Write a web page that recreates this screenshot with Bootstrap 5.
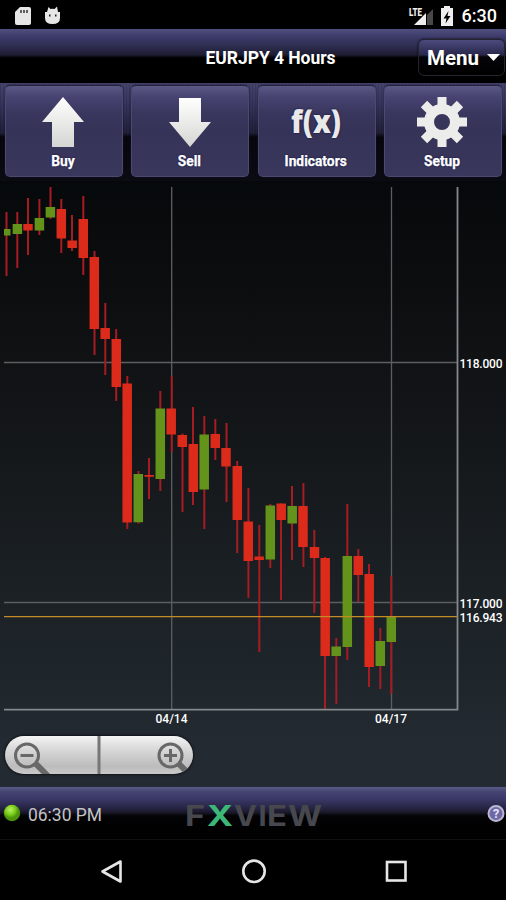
<!DOCTYPE html>
<html lang="en">
<head>
<meta charset="utf-8">
<meta name="viewport" content="width=device-width, initial-scale=1">
<title>FXView</title>
<link href="https://cdn.jsdelivr.net/npm/bootstrap@5.3.0/dist/css/bootstrap.min.css" rel="stylesheet">
<style>
body{background:#000;color:#fff;font-family:Roboto,"Liberation Sans",sans-serif;width:506px;height:900px;overflow:hidden}
svg{display:block;flex:none}
.status{height:29px;font-size:18px;line-height:28px;padding:2px 9px 0 14px}
.titlebar{height:54px;background:linear-gradient(#504e7e 0,#3c3a68 8px,#302f55 16px,#1d1c31 26px,#08080e 28px,#000 29px);font-size:17.5px;letter-spacing:-.05px;padding:2px 1px 0 0;display:grid;grid-template-columns:123px 1fr 87px}
.titlebar h1{font-size:17.5px;padding-top:2px}
.menu-btn{height:37px;margin-top:1px;border:1px solid #24232e;border-radius:6px;background:linear-gradient(#4c4a7e,#28274a 15px,#05050a 17px,#000);font-size:20.5px;padding:1px 4px 0 8px;color:#fff;box-shadow:0 0 2px #000}
.tools{height:98px;background:repeating-linear-gradient(90deg,#0002 0 1px,transparent 1px 3px),linear-gradient(#46446f 0,#34325a 24px,#202038 50px,#06060c 54px,#0b0b13 98px);padding:2px 4px 4px 5px;gap:8.5px}
.tool{flex:1 1 0;border:1px solid #4b4970;border-top-color:#252340;border-radius:5px;background:linear-gradient(#5b5885 0,#454270 12px,#3a375f 26px,#363358 45px,#3a375d);box-shadow:0 0 2px #17162a;color:#fff;font-size:13.8px;line-height:16px;padding:10px 2px 0 0;text-shadow:0 0 2px #0a0938}
.tool span{margin-top:5px;-webkit-text-stroke:.25px #fff}
.chart{height:555px;background:linear-gradient(#06090b,#0c0d0e 100px,#14171a 260px,#1f262b 500px,#222930)}
.below{height:51px;background:#242a31;padding:0 5px}
.zoomer{width:188px;height:38px;border-radius:19px;overflow:hidden;background:linear-gradient(#f5f5f5,#dcdcdc 30%,#bcbcbc 80%,#c9c9c9);box-shadow:0 0 2px 1px #11151a}
.foot{height:53px;border-bottom:1px solid #111;background:linear-gradient(#5b5987 0,#45436f 5px,#3a3866 12px,#292748 20px,#1c1a2d 25px,#030305 29px,#000)}
.navrow{height:60px}
</style>
</head>
<body>
<header class="status d-flex align-items-center">
 <svg width="48" height="24" viewBox="0 0 48 24"><path fill="#e6e6e6" d="M6 3h9q2 0 2 2v14q0 2-2 2H3q-2 0-2-2V8z"/><path d="M7 6v3M10 6v3M13 6v3" stroke="#333" stroke-width="1.5"/><path fill="#e6e6e6" d="M31 8h15v6q0 6-7.500 6T31 14zM33 8l1.500-5 2 2q2-.7 4 0L43 2.500 44 8z"/><path d="M35 11.500h1.500M41 11.500h1.500" stroke="#222" stroke-width="2"/></svg>
 <svg class="ms-auto me-2" width="46" height="24" viewBox="0 0 46 24"><path fill="#777" d="M19 11l6-6v16h-6z" opacity=".6"/><path fill="#eee" d="M6 21L18 9v12z"/><text x="1" y="11.500" font-size="11" font-weight="900" fill="#eee" textLength="13" lengthAdjust="spacingAndGlyphs">LTE</text><path fill="#eee" d="M33 4h3V2h6v2h3v18H33z"/><path fill="#000" d="M40.500 7l-5 7.500h3l-1 5 5-7.500h-3z"/></svg>
 <span class="fw-medium">6:30</span>
</header>
<section class="titlebar">
 <span></span>
 <h1 class="fw-bold text-center align-self-center mb-0">EURJPY 4 Hours</h1>
 <div class="d-flex align-items-center"><button class="menu-btn w-100 fw-bold d-flex align-items-center justify-content-between">Menu <svg width="13" height="8" viewBox="0 0 13 8"><path fill="#fff" d="M0 0h13L6.500 7z"/></svg></button></div>
</section>
<nav class="tools d-flex">
 <button class="tool fw-bold d-flex flex-column align-items-center"><svg width="50" height="52" viewBox="0 0 50 52"><defs><linearGradient id="silver" x2="0" y2="1"><stop stop-color="#fff"/><stop offset="1" stop-color="#d5d5d3"/></linearGradient></defs><path fill="url(#silver)" d="M25 1l21 25H36v25H14V26H4z"/></svg><span>Buy</span></button>
 <button class="tool fw-bold d-flex flex-column align-items-center"><svg width="50" height="52" viewBox="0 0 50 52"><path fill="url(#silver)" d="M15 2h22v24h10L26 51 5 26h10z"/></svg><span>Sell</span></button>
 <button class="tool fw-bold d-flex flex-column align-items-center"><svg width="70" height="52" viewBox="-8 0 70 52"><text x="2" y="37" font-size="31" font-family="Open Sans,sans-serif" font-weight="800" fill="#e9e9e9" textLength="50" lengthAdjust="spacingAndGlyphs">f(x)</text></svg><span>Indicators</span></button>
 <button class="tool fw-bold d-flex flex-column align-items-center"><svg width="52" height="52" viewBox="-26 -26 52 52"><g stroke="#ececeb" stroke-width="9"><path d="M0-25V-15M0 15V25M-25 0h10M15 0h10M-18-18l8 8M10 10l8 8M18-18l-8 8M-10 10l-8 8"/><circle r="13" fill="none" stroke-width="10"/></g></svg><span>Setup</span></button>
</nav>
<main class="chart">
 <svg width="506" height="555" viewBox="0 181 506 555">
  <g stroke="#5c5f61" stroke-width="1.300" fill="none"><path d="M4 362.500H457M4 602.500H457M171.700 187V709M391.500 187V709"/></g>
  <path stroke="#a51c22" stroke-width="2" d="M6.500 212V276M17.300 212V268M28 198V255M39.400 199V235M50.500 187V219M61.300 199V253M72 215V251M83.300 196V275M94.500 251V355M105.300 303V375M116.200 329V401M127.300 376V529M138.500 471V523.500M149 458V499M160.300 391V491M171.700 376V452M182.500 433.500V512M193 407V505M204.300 416V529M215.300 419V460M226.500 423V502M237.200 461V553M248.400 488V598M259.300 525V652M270.300 504V568M281 503.500V600M292 486V560M303.400 483V567M314.300 530V613M325 557V709M336.300 638V704M347.300 504V660M358.300 549V602M369 564V687M380.300 628V689M391.300 576V694"/>
  <path stroke="#dc2a1b" stroke-width="9.500" d="M28 224V230.500M61.300 209V238.500M72.200 240.500V248M83.300 219V258M94.300 257V329M105.200 328V339M116.300 339V387M127.200 383.500V522.500M149.200 475V476.700M171.200 408.500V434.500M182.300 435V447M193.300 444V492M215.300 434V448M226 448V466.500M237.300 466V520M248.300 521.500V561M259.200 556.500V560M281.200 503.500V520M303 506V547M314.500 547V558M325.200 558V656M358.300 556V575M369.200 574V667"/>
  <path stroke="#64931b" stroke-width="9.500" d="M17.400 224V234M39.400 218V230.500M50.400 207V217.500M138.300 474V522.300M160.300 408.500V479M204.200 434.500V489.500M270.300 505.500V559.500M292.200 506V523.500M336.200 646.500V656M347.300 556V647M380.300 641V666M391.300 616.500V642"/>
  <path fill="#64931b" d="M4 229h6.500v6.500H4z"/>
  <path stroke="#c18b25" stroke-width="1.300" d="M4 616.600H457"/>
  <path stroke="#85898c" stroke-width="1.800" fill="none" d="M4 709.700H458M457.500 187V710.500"/>
  <g fill="#fff" font-size="12" font-weight="500">
   <text x="459.500" y="367.500" textLength="43">118.000</text><text x="459.500" y="608" textLength="43">117.000</text><text x="459.500" y="621.700" textLength="43">116.943</text>
   <text x="155.500" y="723" textLength="32">04/14</text><text x="375" y="723" textLength="32">04/17</text>
  </g>
 </svg>
</main>
<section class="below"><div class="zoomer"><svg width="188" height="38" viewBox="0 0 188 38"><path d="M94 0V38" stroke="#777" stroke-width="3"/><g fill="none" stroke="#686868" stroke-width="3"><circle cx="22" cy="19.500" r="11.500"/><path d="M15.500 19.500h13"/><path d="M31 28L43 40" stroke-width="6"/><circle cx="165.500" cy="19.500" r="11.500"/><path d="M159 19.500h13M165.500 13v13"/><path d="M174 28l10 10" stroke-width="6"/></g></svg></div></section>
<footer class="foot"><svg width="506" height="53" viewBox="0 787 506 53"><defs><radialGradient id="lamp" cx=".4" cy=".3"><stop stop-color="#b9ef62"/><stop offset=".6" stop-color="#7bcf1b"/><stop offset="1" stop-color="#4d940c"/></radialGradient></defs>
 <circle cx="12" cy="813" r="8.200" fill="url(#lamp)"/>
 <text x="28" y="821.200" font-size="18.500" fill="#c3c3c6" textLength="74" lengthAdjust="spacingAndGlyphs">06:30 PM</text>
 <g font-family="Inter,sans-serif" font-weight="700" font-size="29" fill="#47484e"><text x="185" y="825.500" textLength="20" lengthAdjust="spacingAndGlyphs">F</text><text x="207" y="825.500" fill="#3bb878" textLength="26" lengthAdjust="spacingAndGlyphs">X</text><text x="234" y="825.500" textLength="23" lengthAdjust="spacingAndGlyphs">V</text><text x="258.500" y="825.500">I</text><text x="267" y="825.500" textLength="20" lengthAdjust="spacingAndGlyphs">E</text><text x="288" y="825.500" textLength="34" lengthAdjust="spacingAndGlyphs">W</text></g>
 <circle cx="496" cy="813.500" r="7.500" fill="#6e68a6" stroke="#b9b7d2" stroke-width="2"/><text x="496" y="818" font-size="12.500" font-weight="700" text-anchor="middle" fill="#e6e4f5">?</text></svg></footer>
<nav class="navrow"><svg width="506" height="60" viewBox="0 840 506 60" fill="none" stroke="#e6e6e6" stroke-width="2.600"><path stroke-linejoin="round" d="M120.500 861.500v20L102.500 871.500z"/><circle cx="254" cy="871.300" r="10.700"/><rect x="387" y="862" width="18.500" height="18.500"/></svg></nav>
<script src="https://cdn.jsdelivr.net/npm/bootstrap@5.3.0/dist/js/bootstrap.bundle.min.js"></script>
</body>
</html>
